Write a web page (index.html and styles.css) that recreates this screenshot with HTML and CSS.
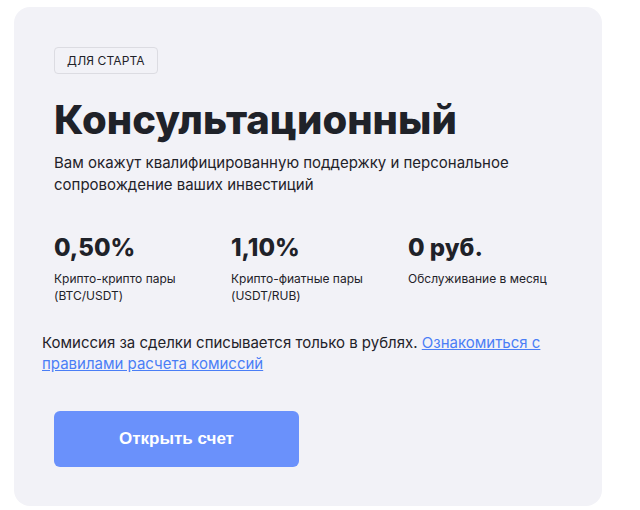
FILE: index.html
```html
<!DOCTYPE html>
<html lang="ru">
  <head>
    <meta charset="UTF-8" />
    <meta name="viewport" content="width=device-width, initial-scale=1.0" />
    <title>Консультационный</title>
    <link rel="stylesheet" href="styles.css">
  </head>
  <body>
    <div class="tariff-card">
      <span class="badge">ДЛЯ СТАРТА</span>
      <h1 class="title">Консультационный</h1>
      <p class="subtitle">
        Вам окажут квалифицированную поддержку и персональное<br />
        сопровождение ваших инвестиций
      </p>

      <div class="stats">
        <div class="stat">
          <div class="stat-value">0,50%</div>
          <div class="stat-label">Крипто-крипто пары<br />(BTC/USDT)</div>
        </div>
        <div class="stat">
          <div class="stat-value">1,10%</div>
          <div class="stat-label">Крипто-фиатные пары<br />(USDT/RUB)</div>
        </div>
        <div class="stat">
          <div class="stat-value">0 руб.</div>
          <div class="stat-label">Обслуживание в месяц</div>
        </div>
      </div>

      <p class="note">
        Комиссия за сделки списывается только в рублях.
        <a href="#" class="note-link">Ознакомиться с правилами расчета комиссий</a>
      </p>

      <button class="open-btn">Открыть счет</button>
    </div>
  </body>
</html>
```

FILE: styles.css
```css
* {
  margin: 0;
  padding: 0;
  box-sizing: border-box;
}

body {
  font-family: Inter, "Liberation Sans", sans-serif;
  background-color: #ffffff;
  color: #1f2229;
  padding: 7px 0 0 14px;
}

.tariff-card {
  width: 588px;
  height: 499px;
  background-color: #f2f2f7;
  border-radius: 16px;
  padding: 40px 40px 0 40px;
  display: flex;
  flex-direction: column;
  align-items: flex-start;
}

.badge {
  display: inline-block;
  height: 27px;
  line-height: 25px;
  padding: 0 12px;
  border: 1px solid #dcdce2;
  border-radius: 4px;
  font-size: 12px;
  letter-spacing: 0.1px;
  color: #1f2229;
}

.title {
  margin-top: 22px;
  font-size: 40px;
  line-height: 48px;
  font-weight: 800;
  color: #1f2229;
}

.subtitle {
  margin-top: 8px;
  font-size: 15px;
  line-height: 22px;
}

.stats {
  display: flex;
  margin-top: 37px;
}

.stat {
  width: 177px;
}

.stat-value {
  font-size: 24px;
  line-height: 30px;
  font-weight: 800;
}

.stat-label {
  margin-top: 7px;
  font-size: 12px;
  line-height: 17px;
}

.note {
  margin: 28px 0 0 -12px;
  font-size: 15px;
  line-height: 21px;
  max-width: 510px;
}

.note-link {
  color: #4a7ef6;
  text-decoration: underline;
}

.open-btn {
  margin-top: 37px;
  width: 245px;
  height: 56px;
  border: none;
  border-radius: 6px;
  background-color: #6a91fb;
  color: #ffffff;
  font-family: "Liberation Sans", Arial, sans-serif;
  font-weight: 700;
  font-size: 17px;
  cursor: pointer;
}
```
